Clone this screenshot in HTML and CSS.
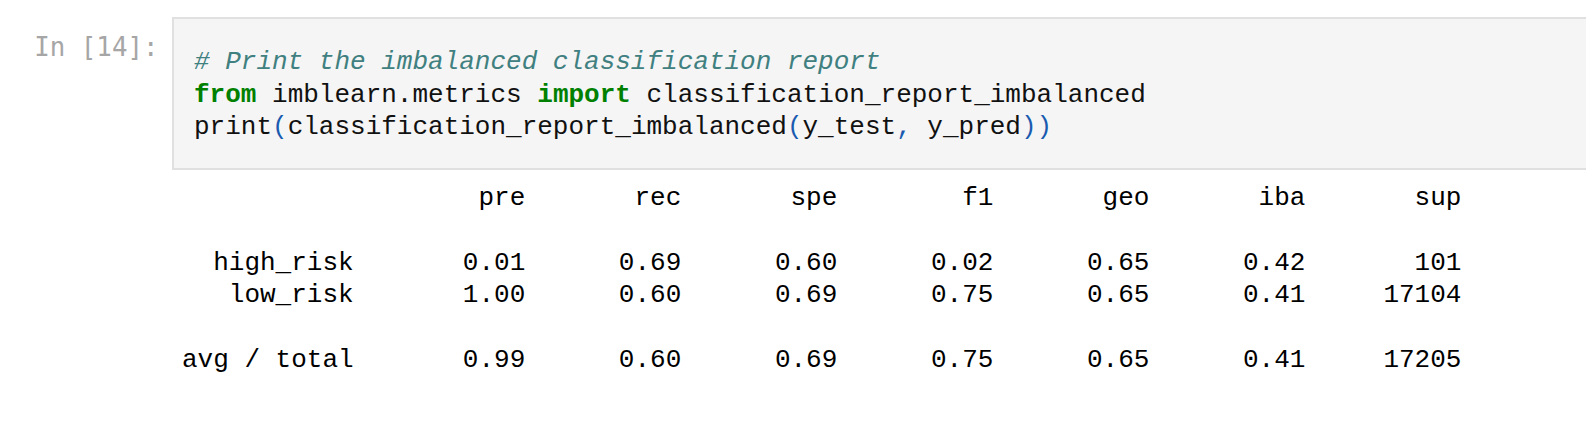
FILE: index.html
```html
<!DOCTYPE html>
<html>
<head>
<meta charset="utf-8">
<link rel="stylesheet" href="styles.css">
</head>
<body>
<div class="cell">
  <div class="row">
    <div class="prompt">In&nbsp;[14]:</div>
    <div class="input-area"><pre class="code"><span class="cm">#&nbsp;Print the imbalanced classification report</span>
<span class="kw">from</span> imblearn.metrics <span class="kw">import</span> classification_report_imbalanced
print<span class="br">(</span>classification_report_imbalanced<span class="br">(</span>y_test<span class="br">,</span> y_pred<span class="br">))</span></pre></div>
  </div>
  <div class="row">
    <div class="prompt out-prompt"></div>
    <pre class="output">                   pre       rec       spe        f1       geo       iba       sup

  high_risk       0.01      0.69      0.60      0.02      0.65      0.42       101
   low_risk       1.00      0.60      0.69      0.75      0.65      0.41     17104

avg / total       0.99      0.60      0.69      0.75      0.65      0.41     17205
</pre>
  </div>
</div>
</body>
</html>
```

FILE: styles.css
```css
html, body {
  margin: 0;
  padding: 0;
  background: #ffffff;
  overflow: hidden;
}

.cell {
  padding-top: 17px;
}

.row {
  display: flex;
  align-items: flex-start;
}

.prompt {
  width: 158.5px;
  flex: none;
  padding-right: 13.5px;
  padding-top: 13.75px;
  text-align: right;
  font-family: "DejaVu Sans Mono", monospace;
  font-size: 25.8px;
  line-height: 32.5px;
  color: #a6a6a6;
  white-space: nowrap;
}

.out-prompt {
  padding-top: 0;
}

.input-area {
  flex: 1;
  background: #f5f5f5;
  border: 2px solid #e0e0e0;
  border-right: none;
  padding: 27.3px 0 24.2px 20px;
}

.code, .output {
  margin: 0;
  font-family: "Liberation Mono", "Courier New", monospace;
  font-size: 26px;
  line-height: 32.5px;
  color: #111;
  white-space: pre;
}

.output {
  margin-top: 11.8px;
  padding-left: 10px;
  color: #000;
}

.cm {
  color: #408080;
  font-style: italic;
}

.kw {
  color: #008000;
  font-weight: bold;
}

.br {
  color: #1a5bb0;
}
```
